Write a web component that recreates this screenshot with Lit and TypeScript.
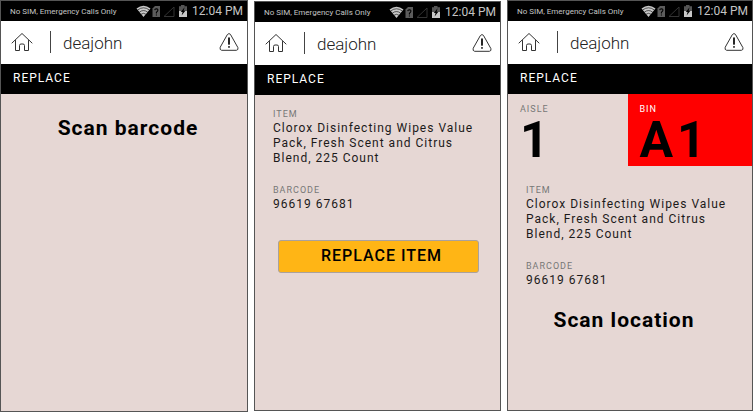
import { LitElement, html, css, nothing } from "lit";
import { customElement, property } from "lit/decorators.js";

@customElement("status-bar")
class StatusBar extends LitElement {
  static styles = css`
    :host {
      display: flex;
      align-items: center;
      height: 20px;
      padding: 0 4px 0 9px;
      background: #000;
      color: #c4c4c4;
    }
    .network {
      flex: 1;
      font-size: 8px;
      white-space: nowrap;
    }
    .icons {
      flex: none;
      width: 52px;
      height: 14px;
    }
    .time {
      margin-left: 4px;
      font-size: 12px;
      line-height: 20px;
      white-space: nowrap;
    }
  `;

  render() {
    return html`
      <span class="network">No SIM, Emergency Calls Only</span>
      <svg class="icons" viewBox="0 0 52 14" aria-hidden="true">
        <path d="M7.5 13 L0.5 4.5 Q7.5 -0.8 14.5 4.5 Z" fill="#c8c8c8" />
        <path
          d="M1.6 6 Q7.5 1.6 13.4 6 M3.4 8.1 Q7.5 5 11.6 8.1 M5.1 10.2 Q7.5 8.4 9.9 10.2"
          fill="none" stroke="#000" stroke-width="0.6"
        />
        <path d="M19 2 H24 V13 H16.5 V4.5 Z" fill="#5c5c5c" />
        <path
          d="M18.7 6.2 Q18.9 4.8 20.4 4.8 Q22 4.9 21.9 6.3 Q21.8 7.3 20.4 8.2 V9.4 M20.4 10.4 V11.6"
          fill="none" stroke="#000" stroke-width="1.1"
        />
        <path d="M38 3 V12.5 H28 Z" fill="none" stroke="#333" />
        <path d="M45 1 H48.5 V2.3 H51 V7 H43 V2.3 H45 Z" fill="#555" />
        <path d="M43 7 H51 V13 H43 Z" fill="#c8c8c8" />
        <path d="M48.6 3.2 L44.8 8 H46.6 L45.6 11.4 L49.4 6.8 H47.6 Z" fill="#000" />
      </svg>
      <span class="time">12:04 PM</span>
    `;
  }
}

@customElement("app-header")
class AppHeader extends LitElement {
  static styles = css`
    :host {
      display: block;
    }
    .bar {
      display: flex;
      align-items: center;
      height: 43px;
      padding: 0 8px 0 10px;
      background: #fff;
      color: #333;
    }
    button {
      display: block;
      padding: 0 0 2px;
      border: 0;
      background: none;
      color: inherit;
    }
    svg {
      display: block;
      fill: none;
      stroke: currentColor;
      stroke-linejoin: round;
      stroke-linecap: round;
    }
    .home svg {
      width: 22px;
      height: 20px;
    }
    .alert svg {
      width: 20px;
      height: 20px;
    }
    .rule {
      width: 1px;
      height: 22px;
      margin: 0 12px 2px 17px;
      background: #444;
    }
    .user {
      flex: 1;
      font-size: 17px;
      font-weight: 300;
      color: #222;
    }
    h1 {
      margin: 0;
      padding: 0 12px 2px;
      background: #000;
      color: #fff;
      font-size: 12px;
      line-height: 28px;
      font-weight: 400;
      letter-spacing: 1px;
    }
  `;

  render() {
    return html`
      <div class="bar">
        <button class="home" aria-label="Home">
          <svg viewBox="0 0 22 20">
            <path d="M1 11 L11 1.5 L21 11 M4.5 8.5 V18.5 H8.5 V13.5 Q8.5 12 10 12 H12 Q13.5 12 13.5 13.5 V18.5 H17.5 V8.5" />
          </svg>
        </button>
        <span class="rule"></span>
        <span class="user">deajohn</span>
        <button class="alert" aria-label="Alerts">
          <svg viewBox="0 0 20 20">
            <path d="M8.6 2.3 Q10 0.7 11.4 2.3 L18.9 15.6 Q19.6 17.9 17.4 18.3 H2.6 Q0.4 17.9 1.1 15.6 Z" />
            <path d="M10 6 V12 M10 14.8 V15" stroke="#000" stroke-width="1.7" />
          </svg>
        </button>
      </div>
      <h1>REPLACE</h1>
    `;
  }
}

@customElement("item-details")
class ItemDetails extends LitElement {
  static styles = css`
    :host {
      display: block;
      padding: 0 18px;
    }
    dl,
    dd {
      margin: 0;
    }
    dt {
      color: #777;
      font-size: 9px;
      line-height: 12px;
      letter-spacing: 1px;
    }
    dd {
      padding-top: 1px;
      color: #1c1a1a;
      font-size: 12px;
      line-height: 15px;
      letter-spacing: 1px;
    }
    dd + dt {
      margin-top: 18px;
    }
  `;

  render() {
    return html`
      <dl>
        <dt>ITEM</dt>
        <dd>Clorox Disinfecting Wipes Value Pack, Fresh Scent and Citrus Blend, 225 Count</dd>
        <dt>BARCODE</dt>
        <dd>96619 67681</dd>
      </dl>
    `;
  }
}

type Step = "barcode" | "item" | "location";

@customElement("phone-screen")
class PhoneScreen extends LitElement {
  @property() step: Step = "barcode";

  static styles = css`
    :host {
      display: block;
      box-sizing: border-box;
      border: 1px solid #555;
      background: #e6d7d4;
    }
    .prompt {
      margin: 0;
      color: #000;
      font-size: 21px;
      line-height: 24px;
      font-weight: 700;
      letter-spacing: 1px;
      text-align: center;
    }
    .first {
      padding: 22px 0 0 8px;
    }
    .second {
      padding: 20px 12px 0 0;
    }
    .details {
      padding-top: 13px;
    }
    .action {
      display: block;
      width: calc(100% - 44px);
      height: 33px;
      margin: 28px 21px 0 23px;
      padding: 0 0 2px 6px;
      border: 1px solid #aaa19c;
      border-radius: 3px;
      background: #ffb515;
      color: #000;
      font-family: inherit;
      font-size: 16px;
      font-weight: 500;
      letter-spacing: 1px;
    }
    .place {
      display: grid;
      grid-template-columns: 120fr 125fr;
      margin: 0 0 5px;
    }
    .cell {
      box-sizing: border-box;
      height: 72px;
      padding: 9px 12px 0;
    }
    .bin {
      background: #f00;
    }
    .cell dt {
      color: #777;
      font-size: 9px;
      line-height: 12px;
      letter-spacing: 1px;
    }
    .bin dt {
      color: #fff;
    }
    .cell dd {
      margin: 0;
      color: #000;
      font-size: 50px;
      line-height: 50px;
      font-weight: 700;
      letter-spacing: 4px;
    }
  `;

  render() {
    return html`
      <status-bar></status-bar>
      <app-header></app-header>
      ${this.step === "barcode" ? html`<p class="prompt first">Scan barcode</p>` : nothing}
      ${this.step === "location"
        ? html`
            <dl class="place">
              <div class="cell">
                <dt>AISLE</dt>
                <dd>1</dd>
              </div>
              <div class="cell bin">
                <dt>BIN</dt>
                <dd>A1</dd>
              </div>
            </dl>
          `
        : nothing}
      ${this.step !== "barcode" ? html`<item-details class="details"></item-details>` : nothing}
      ${this.step === "item" ? html`<button class="action">REPLACE ITEM</button>` : nothing}
      ${this.step === "location" ? html`<p class="prompt second">Scan location</p>` : nothing}
    `;
  }
}

@customElement("app-root")
class AppRoot extends LitElement {
  static styles = css`
    :host {
      display: grid;
      grid-template-columns: 248fr 247fr 246fr;
      column-gap: 6px;
      min-height: 100vh;
      background: #fff;
      font-family: Roboto, "Liberation Sans", sans-serif;
    }
    .middle {
      margin: 1px 0;
    }
    .last {
      margin-bottom: 1px;
    }
  `;

  render() {
    return html`
      <phone-screen step="barcode"></phone-screen>
      <phone-screen class="middle" step="item"></phone-screen>
      <phone-screen class="last" step="location"></phone-screen>
    `;
  }
}
